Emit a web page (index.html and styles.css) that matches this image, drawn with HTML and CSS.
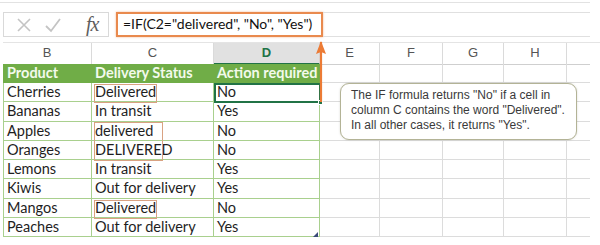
FILE: index.html
```html
<!DOCTYPE html>
<html>
<head>
<meta charset="utf-8">
<link rel="stylesheet" href="styles.css">
</head>
<body>
<div class="sheet">
  <div class="top-rule"></div>
  <div class="fbar">
    <div class="fbtns">
      <svg class="ico" width="16" height="16" viewBox="0 0 16 16"><path d="M2 2 L14 14 M14 2 L2 14" stroke="#c4c4c4" stroke-width="1.6" fill="none"/></svg>
      <svg class="ico" width="18" height="16" viewBox="0 0 18 16"><path d="M2 9 L7 14 L16 2" stroke="#c4c4c4" stroke-width="1.8" fill="none"/></svg>
      <span class="fx">fx</span>
    </div>
    <div class="formula">=IF(C2="delivered", "No", "Yes")</div>
    <div class="fbar-rest"></div>
  </div>
  <div class="grid colhdr">
    <div class="ch">B</div>
    <div class="ch">C</div>
    <div class="ch ch-sel">D</div>
    <div class="ch">E</div>
    <div class="ch">F</div>
    <div class="ch">G</div>
    <div class="ch">H</div>
    <div class="ch ch-end"></div>
  </div>
  <div class="grid body">
    <div class="c th first">Product</div><div class="c th">Delivery Status</div><div class="c th last">Action required</div><div class="c e"></div><div class="c e"></div><div class="c e"></div><div class="c e"></div><div class="c x"></div>
    <div class="c td first">Cherries</div><div class="c td">Delivered</div><div class="c td last">No</div><div class="c e"></div><div class="c e"></div><div class="c e"></div><div class="c e"></div><div class="c x"></div>
    <div class="c td first">Bananas</div><div class="c td">In transit</div><div class="c td last">Yes</div><div class="c e"></div><div class="c e"></div><div class="c e"></div><div class="c e"></div><div class="c x"></div>
    <div class="c td first">Apples</div><div class="c td">delivered</div><div class="c td last">No</div><div class="c e"></div><div class="c e"></div><div class="c e"></div><div class="c e"></div><div class="c x"></div>
    <div class="c td first">Oranges</div><div class="c td">DELIVERED</div><div class="c td last">No</div><div class="c e"></div><div class="c e"></div><div class="c e"></div><div class="c e"></div><div class="c x"></div>
    <div class="c td first">Lemons</div><div class="c td">In transit</div><div class="c td last">Yes</div><div class="c e"></div><div class="c e"></div><div class="c e"></div><div class="c e"></div><div class="c x"></div>
    <div class="c td first">Kiwis</div><div class="c td">Out for delivery</div><div class="c td last">Yes</div><div class="c e"></div><div class="c e"></div><div class="c e"></div><div class="c e"></div><div class="c x"></div>
    <div class="c td first">Mangos</div><div class="c td">Delivered</div><div class="c td last">No</div><div class="c e"></div><div class="c e"></div><div class="c e"></div><div class="c e"></div><div class="c x"></div>
    <div class="c td first">Peaches</div><div class="c td">Out for delivery</div><div class="c td last">Yes</div><div class="c e"></div><div class="c e"></div><div class="c e"></div><div class="c e"></div><div class="c x"></div>
  </div>

  <div class="hl hl-1"></div>
  <div class="hl hl-2"></div>
  <div class="hl hl-3"></div>
  <div class="sel"><span class="sel-handle"></span></div>
  <div class="resize"></div>
  <svg class="arrow" width="14" height="68" viewBox="0 0 14 68">
    <path d="M7 6 L7 66" stroke="#ec7b35" stroke-width="2.2" fill="none"/>
    <path d="M7 5 L12 18 L7 16 L2 18 Z" fill="#ec7b35"/>
  </svg>
  <div class="callout">The IF formula returns "No" if a cell in column C contains the word "Delivered". In all other cases, it returns "Yes".</div>
</div>
</body>
</html>
```
FILE: styles.css
```css
* { box-sizing: border-box; }
html, body { margin: 0; padding: 0; background: #fff; }
.sheet {
  position: relative;
  width: 600px;
  height: 245px;
  overflow: hidden;
  font-family: Lato, "Liberation Sans", sans-serif;
  color: #1e1e1e;
}
.top-rule {
  margin-top: 2px;
  width: 590px;
  height: 1px;
  background: #e2e2e2;
}
.fbar {
  margin-top: 9px;
  padding-left: 3px;
  display: flex;
  height: 25px;
  width: 590px;
}
.fbtns {
  width: 106px;
  border: 1px solid #d9d9d9;
  display: flex;
  align-items: center;
  padding-left: 12px;
  gap: 12px;
}
.fx {
  font-family: "Liberation Serif", serif;
  font-style: italic;
  font-size: 20px;
  color: #5e5e5e;
  margin-left: 12px;
  letter-spacing: -1px;
}
.formula {
  margin-left: 7px;
  width: 207px;
  border: 2px solid #e98a4e;
  box-shadow: 0 0 2px rgba(233, 138, 78, 0.6);
  font-size: 14px;
  line-height: 20px;
  padding-left: 5px;
  white-space: nowrap;
  color: #111;
}
.fbar-rest {
  flex: 1;
  border-top: 1px solid #e0e0e0;
  border-bottom: 1px solid #e0e0e0;
}
.grid {
  display: grid;
  grid-template-columns: 89px 122px 106px 60px 63px 61px 63px 23px;
  margin-left: 3px;
}
.colhdr {
  margin-top: 5px;
  height: 22px;
  border-top: 1px solid #e4e4e4;
}
.ch {
  border-right: 1px solid #dadada;
  border-bottom: 1px solid #cfcfcf;
  font-family: "Liberation Sans", sans-serif;
  font-size: 13px;
  color: #555;
  text-align: center;
  line-height: 20px;
}
.ch-sel {
  background: #e1e1e1;
  border-bottom: 2px solid #217346;
  color: #217346;
  font-weight: bold;
}
.ch-end { border-right: none; }
.body {
  grid-template-rows: 19px;
  grid-auto-rows: 19.25px;
}
.c {
  font-size: 14.5px;
  line-height: 18px;
  padding-left: 3px;
  white-space: nowrap;
  overflow: hidden;
}
.th {
  background: #70ad47;
  color: #f3faec;
  font-weight: bold;
  border-bottom: 1px solid #70ad47;
}
.td {
  border-right: 1px solid #a9d08e;
  border-bottom: 1px solid #a9d08e;
}
.td.first { border-left: 1px solid #a9d08e; }
.th.first { border-left: 1px solid #70ad47; }
.td.last { border-right: 1px solid #a9d08e; }
.e {
  border-right: 1px solid #dcdcdc;
  border-bottom: 1px solid #dcdcdc;
}
.x { border-bottom: 1px solid #dcdcdc; }

.hl {
  position: absolute;
  border: 1.5px solid #d9a282;
}
.hl-1 { left: 94px; top: 84px; width: 63px; height: 19px; }
.hl-2 { left: 94px; top: 122px; width: 69px; height: 39px; }
.hl-3 { left: 94px; top: 200px; width: 63px; height: 19px; }
.sel {
  position: absolute;
  left: 214px;
  top: 83px;
  width: 107px;
  height: 20px;
  border: 2px solid #217346;
}
.sel-handle {
  position: absolute;
  right: -4px;
  bottom: -4px;
  width: 5px;
  height: 5px;
  background: #217346;
  border: 1px solid #fff;
}
.resize {
  position: absolute;
  left: 313px;
  top: 232px;
  width: 0;
  height: 0;
  border-left: 5px solid transparent;
  border-bottom: 5px solid #3a4a78;
}
.arrow {
  position: absolute;
  left: 314px;
  top: 36px;
}
.callout {
  position: absolute;
  left: 340px;
  top: 83px;
  width: 237px;
  height: 57px;
  border: 1.5px solid #b3b396;
  border-radius: 9px;
  background: #fff;
  box-shadow: 0 0 2px rgba(120, 120, 90, 0.3);
  font-family: "Liberation Sans", sans-serif;
  font-size: 12px;
  line-height: 15px;
  color: #3a3a3a;
  padding: 4px 8px 0 10px;
}
```
